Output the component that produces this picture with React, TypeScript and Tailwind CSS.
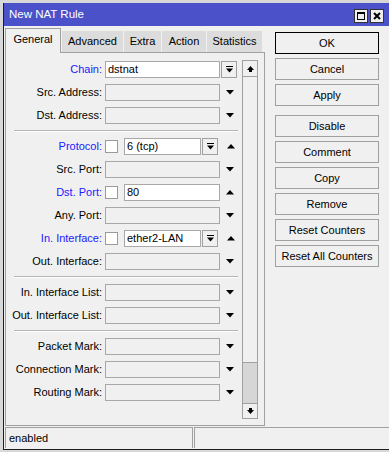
import React from 'react';

type Field = 'empty' | 'combo' | 'checkcombo' | 'checktext';
type Row = { label: string; blue?: boolean; kind: Field; value?: string } | 'sep';

const rows: Row[] = [
    { label: 'Chain:', blue: true, kind: 'combo', value: 'dstnat' },
    { label: 'Src. Address:', kind: 'empty' },
    { label: 'Dst. Address:', kind: 'empty' },
    'sep',
    { label: 'Protocol:', blue: true, kind: 'checkcombo', value: '6 (tcp)' },
    { label: 'Src. Port:', kind: 'empty' },
    { label: 'Dst. Port:', blue: true, kind: 'checktext', value: '80' },
    { label: 'Any. Port:', kind: 'empty' },
    { label: 'In. Interface:', blue: true, kind: 'checkcombo', value: 'ether2-LAN' },
    { label: 'Out. Interface:', kind: 'empty' },
    'sep',
    { label: 'In. Interface List:', kind: 'empty' },
    { label: 'Out. Interface List:', kind: 'empty' },
    'sep',
    { label: 'Packet Mark:', kind: 'empty' },
    { label: 'Connection Mark:', kind: 'empty' },
    { label: 'Routing Mark:', kind: 'empty' },
];

const buttons = ['OK', 'Cancel', 'Apply', 'Disable', 'Comment', 'Copy', 'Remove', 'Reset Counters', 'Reset All Counters'];
const tabs = [
    { name: 'Advanced', w: 'w-[61px]' },
    { name: 'Extra', w: 'w-[37px]' },
    { name: 'Action', w: 'w-[44px]' },
    { name: 'Statistics', w: 'w-[55px]' },
];

const Down = () => (
    <svg width="8" height="5" viewBox="0 0 8 5"><polygon points="0,0 8,0 4,4.5" fill="#000" /></svg>
);
const Up = () => (
    <svg width="8" height="5" viewBox="0 0 8 5"><polygon points="0,4.5 8,4.5 4,0" fill="#000" /></svg>
);
const ComboIcon = () => (
    <svg width="7" height="7" viewBox="0 0 7 7"><rect x="0" y="0" width="7" height="1" fill="#000" /><polygon points="0,2.5 7,2.5 3.5,6.5" fill="#000" /></svg>
);

function Check() {
    return <div className="w-[13px] h-[13px] border border-[#9a9a9a] bg-white shrink-0" />;
}

function ComboBtn() {
    return (
        <div className="ml-[1px] w-[16px] h-[17px] border border-[#a0a0a0] bg-[#f0f0f0] flex items-center justify-center shrink-0">
            <ComboIcon />
        </div>
    );
}

function FieldCell({ row }: { row: Exclude<Row, 'sep'> }) {
    if (row.kind === 'empty') {
        return (
            <div className="flex items-center">
                <div className="w-[115px] h-[17px] border border-[#a8a8a8] bg-[#f0f0f0]" />
                <div className="ml-[1px] w-[17px] flex justify-center"><Down /></div>
            </div>
        );
    }
    if (row.kind === 'combo') {
        return (
            <div className="flex items-center">
                <div className="w-[115px] h-[17px] border border-[#a8a8a8] bg-white pl-[2px] leading-[15px]">{row.value}</div>
                <ComboBtn />
            </div>
        );
    }
    if (row.kind === 'checkcombo') {
        return (
            <div className="flex items-center">
                <Check />
                <div className="ml-[6px] w-[77px] h-[17px] border border-[#a8a8a8] bg-white pl-[2px] leading-[15px]">{row.value}</div>
                <ComboBtn />
                <div className="ml-[4px] w-[17px] flex justify-center"><Up /></div>
            </div>
        );
    }
    return (
        <div className="flex items-center">
            <Check />
            <div className="ml-[6px] w-[96px] h-[17px] border border-[#a8a8a8] bg-white pl-[2px] leading-[15px]">{row.value}</div>
            <div className="ml-[1px] w-[17px] flex justify-center"><Up /></div>
        </div>
    );
}

export default function App() {
    return (
        <div className="w-[389px] h-[452px] bg-[#d8d8d8] pt-[3px] pl-[3px] overflow-hidden font-['Liberation_Sans',Arial,sans-serif] text-[11px] text-black">
            <div className="w-[386px] h-[447px] border-l border-b border-[#1e1e1e] bg-[#f0f0f0] flex flex-col">
                {/* title bar */}
                <div className="h-[23px] bg-[#4a51c9] flex items-center pl-[5px] pr-[5px] shrink-0">
                    <span className="text-white text-[11.5px]">New NAT Rule</span>
                    <div className="ml-auto flex gap-[2px] mt-[3px]">
                        <div className="w-[14px] h-[14px] bg-[#f0f0f0] border border-[#333] flex items-center justify-center">
                            <div className="w-[8px] h-[8px] border border-black border-t-2" />
                        </div>
                        <div className="w-[14px] h-[14px] bg-[#f0f0f0] border border-[#333] flex items-center justify-center">
                            <svg width="8" height="8" viewBox="0 0 8 8"><path d="M1 1 L7 7 M7 1 L1 7" stroke="#000" strokeWidth="2" /></svg>
                        </div>
                    </div>
                </div>

                {/* body */}
                <div className="flex pt-[2px] h-[401px] shrink-0">
                    <div className="ml-[1px] w-[260px] flex flex-col">
                        <div className="flex items-end h-[24px]">
                            <div className="relative z-10 w-[56px] h-[25px] -mb-px bg-[#f0f0f0] border-l border-t border-r border-[#a0a0a0] flex items-center justify-center pb-[3px]">
                                General
                            </div>
                            <div className="flex gap-px ml-px">
                                {tabs.map((t) => (
                                    <div key={t.name} className={`${t.w} h-[21px] bg-[#dcdcdc] flex items-center justify-center`}>
                                        {t.name}
                                    </div>
                                ))}
                            </div>
                        </div>
                        <div className="h-[374px] border border-[#a0a0a0] flex">
                            <div className="w-[236px] pt-[8px] flex flex-col gap-[6px]">
                                {rows.map((r, i) =>
                                    r === 'sep' ? (
                                        <div key={i} className="ml-[8px] w-[224px] h-[2px] border-t border-[#b4b4b4] border-b border-b-white" />
                                    ) : (
                                        <div key={i} className="flex items-center h-[17px]">
                                            <div className={`w-[96px] text-right whitespace-nowrap ${r.blue ? 'text-[#1a1aff]' : ''}`}>{r.label}</div>
                                            <div className="ml-[3px]"><FieldCell row={r} /></div>
                                        </div>
                                    )
                                )}
                            </div>
                            {/* scrollbar */}
                            <div className="mt-[7px] w-[16px] h-[359px] flex flex-col">
                                <div className="h-[17px] border border-[#a0a0a0] flex items-center justify-center">
                                    <svg width="7" height="6" viewBox="0 0 7 6"><polygon points="3.5,0 7,4 0,4" fill="#000" /><rect x="2" y="4" width="3" height="2" fill="#000" /></svg>
                                </div>
                                <div className="h-[286px] border-x border-b border-[#a0a0a0] bg-[#f0f0f0]" />
                                <div className="h-[40px] border-x border-[#a0a0a0] bg-[#d6d6d6]" />
                                <div className="h-[16px] border border-[#a0a0a0] flex items-center justify-center">
                                    <svg width="7" height="6" viewBox="0 0 7 6"><rect x="2" y="0" width="3" height="2" fill="#000" /><polygon points="0,2 7,2 3.5,6" fill="#000" /></svg>
                                </div>
                            </div>
                        </div>
                    </div>

                    <div className="ml-[10px] mt-[4px] flex flex-col gap-[4px]">
                        {buttons.map((b, i) => (
                            <div
                                key={b}
                                className={`w-[104px] h-[22px] flex items-center justify-center bg-[#f0f0f0] border ${i === 0 ? 'border-black' : 'border-[#a0a0a0]'} ${i === 3 ? 'mt-[5px]' : ''}`}
                            >
                                {b}
                            </div>
                        ))}
                    </div>
                </div>

                {/* status bar */}
                <div className="flex h-[21px] ml-[1px] shrink-0">
                    <div className="w-[188px] border-t border-l border-r border-[#a0a0a0] pl-[3px] flex items-center">enabled</div>
                    <div className="ml-[1px] flex-1 border-t border-l border-[#a0a0a0]" />
                </div>
            </div>
        </div>
    );
}
